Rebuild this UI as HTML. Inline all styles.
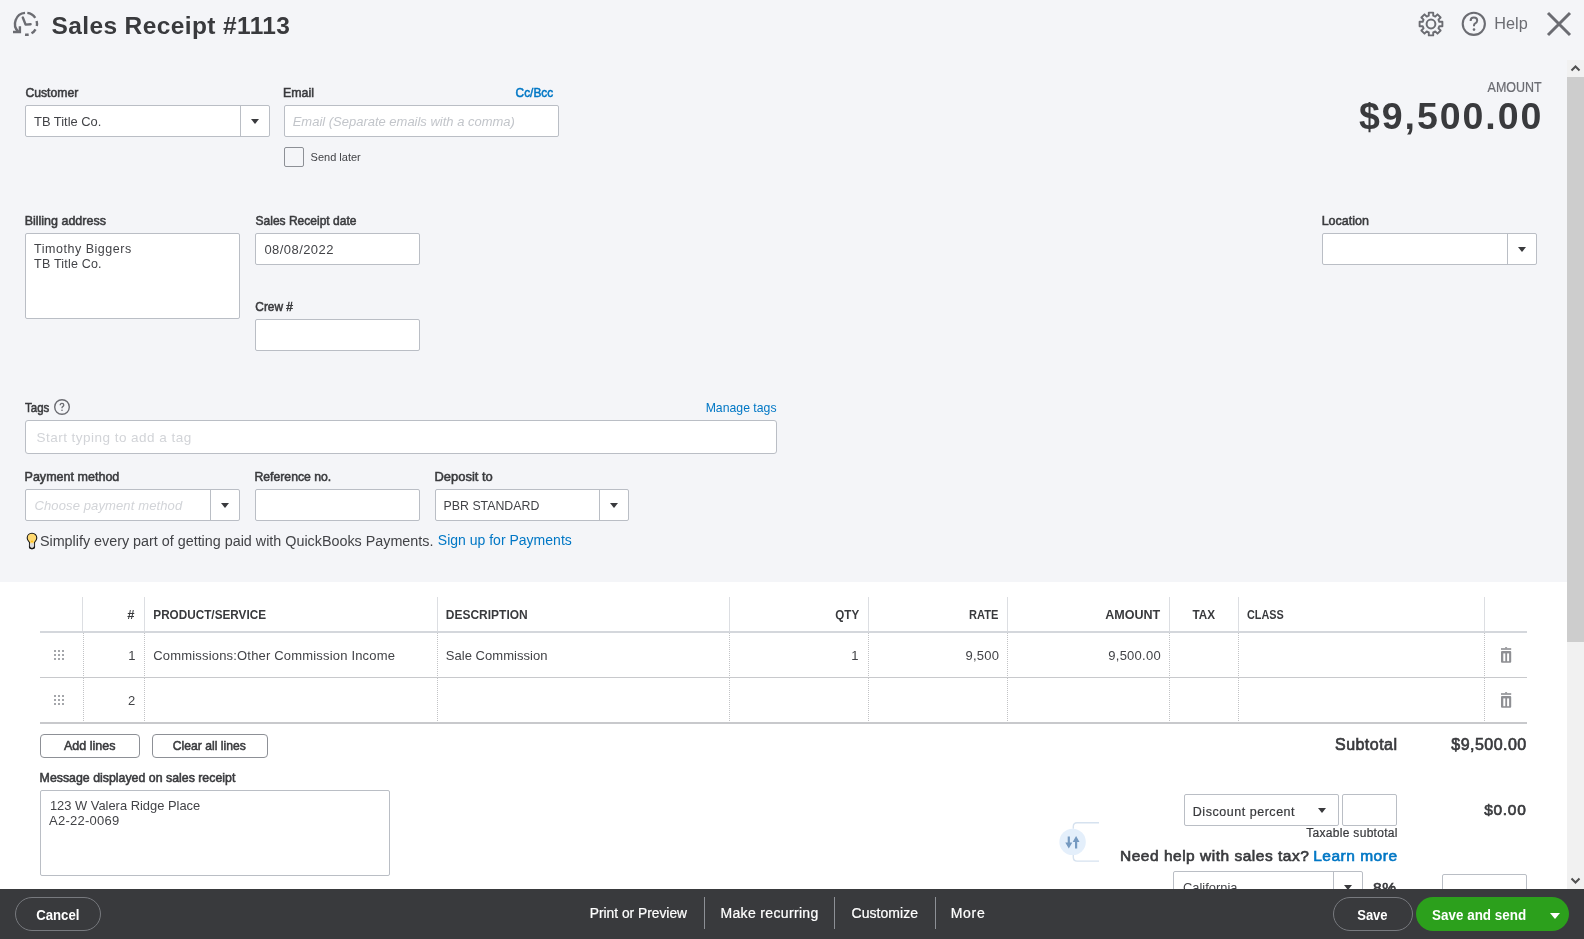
<!DOCTYPE html>
<html><head><meta charset="utf-8">
<title>Sales Receipt #1113</title>
<style>
*{box-sizing:border-box;margin:0;padding:0}
html,body{width:1584px;height:939px;overflow:hidden;background:#fff}
body{font-family:"Liberation Sans",sans-serif;color:#393a3d;position:relative}
.a{position:absolute}
.topbg{position:absolute;left:0;top:0;width:1567px;height:582px;background:#f4f5f8}
.inp{position:absolute;background:#fff;border:1px solid #babec5;border-radius:2px}
.dd{position:absolute;top:0;bottom:0;right:0;border-left:1px solid #babec5}
.arr{position:absolute;width:0;height:0;border-left:4.5px solid transparent;border-right:4.5px solid transparent;border-top:5px solid #393a3d}
.hv{position:absolute;top:597px;width:1px;height:34px;background:#dcdee2}
.vl{position:absolute;width:1px;background-image:linear-gradient(to bottom,#c2c3c6 50%,transparent 50%);background-size:1px 2px}
.btn{position:absolute;border:1px solid #8d9096;border-radius:4px;background:#fff}
.foot{position:absolute;left:0;top:889px;width:1584px;height:50px;background:#393a3d;z-index:10}
.sep{position:absolute;top:897px;width:1px;height:32px;background:#8d9096;z-index:11}
</style></head><body>
<div class="topbg"></div>
<div class="a" style="left:1567px;top:0;width:17px;height:60px;background:#f4f5f8"></div>

<!-- header icons -->
<svg class="a" style="left:8px;top:6px" width="36" height="36" viewBox="0 0 36 36"><path d="M17.04 6.84 A11 11 0 0 0 10.22 25.58 M19.34 6.88 A11 11 0 0 1 27.23 11.81 M28.63 14.95 A11 11 0 0 1 28.76 20.09 M27.53 23.30 A11 11 0 0 1 23.50 27.33 M20.66 28.47 A11 11 0 0 1 17.04 28.76" fill="none" stroke="#6b6c72" stroke-width="2.4"/><path d="M5 26 H11.9 V20.3" fill="none" stroke="#6b6c72" stroke-width="2.4"/><path d="M14.8 11.5 L17.6 18.6 L22.6 18.2" fill="none" stroke="#6b6c72" stroke-width="2.4" stroke-linecap="round" stroke-linejoin="round"/></svg>
<svg class="a" style="left:1416.5px;top:10px" width="28" height="28" viewBox="0 0 28 28"><path d="M11.77 5.69 L11.79 2.61 L16.21 2.61 L16.23 5.69 L18.30 6.55 L20.49 4.38 L23.62 7.51 L21.45 9.70 L22.31 11.77 L25.39 11.79 L25.39 16.21 L22.31 16.23 L21.45 18.30 L23.62 20.49 L20.49 23.62 L18.30 21.45 L16.23 22.31 L16.21 25.39 L11.79 25.39 L11.77 22.31 L9.70 21.45 L7.51 23.62 L4.38 20.49 L6.55 18.30 L5.69 16.23 L2.61 16.21 L2.61 11.79 L5.69 11.77 L6.55 9.70 L4.38 7.51 L7.51 4.38 L9.70 6.55 Z" fill="none" stroke="#6b6c72" stroke-width="1.9" stroke-linejoin="round"/><circle cx="14" cy="14" r="4.4" fill="none" stroke="#6b6c72" stroke-width="2"/></svg>
<svg class="a" style="left:1460px;top:10px" width="28" height="28" viewBox="0 0 28 28"><circle cx="13.8" cy="13.8" r="11.1" fill="none" stroke="#6b6c72" stroke-width="2.1"/><path d="M10.6 11 Q10.6 7.6 13.9 7.6 Q17.2 7.6 17.2 10.6 Q17.2 12.6 14.9 13.6 Q14 14.1 14 15.6 V16.2" fill="none" stroke="#6b6c72" stroke-width="2"/><circle cx="14" cy="19.6" r="1.3" fill="#6b6c72"/></svg>
<svg class="a" style="left:1544px;top:9px" width="30" height="30" viewBox="0 0 30 30"><path d="M4 4 L26 26 M26 4 L4 26" stroke="#6b6c72" stroke-width="3"/></svg>

<!-- customer / email -->
<div class="inp" style="left:25px;top:105px;width:245px;height:32px"><div class="dd" style="width:29px"></div></div>
<div class="arr" style="left:251px;top:119px"></div>
<div class="inp" style="left:284px;top:105px;width:275px;height:32px"></div>
<div class="inp" style="left:284px;top:147px;width:20px;height:20px;border:1.5px solid #8d9096;border-radius:2px;background:transparent"></div>

<!-- billing / date / crew / location -->
<div class="inp" style="left:25px;top:233px;width:215px;height:86px"></div>
<div class="inp" style="left:255px;top:233px;width:165px;height:32px"></div>
<div class="inp" style="left:255px;top:319px;width:165px;height:32px"></div>
<div class="inp" style="left:1322px;top:233px;width:215px;height:32px"><div class="dd" style="width:29px"></div></div>
<div class="arr" style="left:1518px;top:247px"></div>

<!-- tags -->
<svg class="a" style="left:52px;top:397px" width="20" height="20" viewBox="0 0 20 20"><circle cx="10" cy="10" r="7.3" fill="none" stroke="#6b6c72" stroke-width="1.4"/><path d="M8.2 8.3 Q8.2 6.4 10 6.4 Q11.8 6.4 11.8 8 Q11.8 9 10.7 9.6 Q10 10 10 10.9 V11.3" fill="none" stroke="#6b6c72" stroke-width="1.3"/><circle cx="10" cy="13.2" r="0.8" fill="#6b6c72"/></svg>
<div class="inp" style="left:25px;top:420px;width:752px;height:34px;border-radius:3px"></div>

<!-- payment -->
<div class="inp" style="left:25px;top:489px;width:215px;height:32px"><div class="dd" style="width:29px"></div></div>
<div class="arr" style="left:221px;top:503px"></div>
<div class="inp" style="left:255px;top:489px;width:165px;height:32px"></div>
<div class="inp" style="left:435px;top:489px;width:194px;height:32px"><div class="dd" style="width:29px"></div></div>
<div class="arr" style="left:610px;top:503px"></div>

<svg class="a" style="left:24px;top:531px" width="16" height="20" viewBox="0 0 16 20"><path d="M8 2.3 C5.1 2.3 3.2 4.4 3.2 6.9 C3.2 8.9 4.5 10 5.5 11.5 L5.5 15.5 Q5.5 17.6 8 17.6 Q10.5 17.6 10.5 15.5 L10.5 11.5 C11.5 10 12.8 8.9 12.8 6.9 C12.8 4.4 10.9 2.3 8 2.3 Z" fill="#ffd970" stroke="#1a1a1a" stroke-width="1.1"/><path d="M5.9 12.2 H10.1 V15.6 Q10.1 17 8 17 Q5.9 17 5.9 15.6 Z" fill="#dcdcdc"/><path d="M6.6 9.8 L8 11.5 L9.4 9.8 Z" fill="#ffb800"/><path d="M5.5 15.5 Q5.5 17.6 8 17.6 Q10.5 17.6 10.5 15.5" fill="none" stroke="#1a1a1a" stroke-width="1.3"/></svg>

<!-- table -->
<div class="hv" style="left:82px"></div>
<div class="hv" style="left:144px"></div>
<div class="hv" style="left:437px"></div>
<div class="hv" style="left:729px"></div>
<div class="hv" style="left:868px"></div>
<div class="hv" style="left:1007px"></div>
<div class="hv" style="left:1169px"></div>
<div class="hv" style="left:1238px"></div>
<div class="hv" style="left:1484px"></div>
<div class="a" style="left:40px;top:631px;width:1487px;height:2px;background:#d4d7dc"></div>

<div class="vl" style="left:83px;top:633px;height:44px"></div>
<div class="vl" style="left:144px;top:633px;height:44px"></div>
<div class="vl" style="left:437px;top:633px;height:44px"></div>
<div class="vl" style="left:729px;top:633px;height:44px"></div>
<div class="vl" style="left:868px;top:633px;height:44px"></div>
<div class="vl" style="left:1007px;top:633px;height:44px"></div>
<div class="vl" style="left:1169px;top:633px;height:44px"></div>
<div class="vl" style="left:1238px;top:633px;height:44px"></div>
<div class="vl" style="left:1484px;top:633px;height:44px"></div>
<div class="a" style="left:40px;top:677px;width:1487px;height:1px;background:#c8c9cc"></div>
<div class="vl" style="left:83px;top:678px;height:44px"></div>
<div class="vl" style="left:144px;top:678px;height:44px"></div>
<div class="vl" style="left:437px;top:678px;height:44px"></div>
<div class="vl" style="left:729px;top:678px;height:44px"></div>
<div class="vl" style="left:868px;top:678px;height:44px"></div>
<div class="vl" style="left:1007px;top:678px;height:44px"></div>
<div class="vl" style="left:1169px;top:678px;height:44px"></div>
<div class="vl" style="left:1238px;top:678px;height:44px"></div>
<div class="vl" style="left:1484px;top:678px;height:44px"></div>
<div class="a" style="left:40px;top:722px;width:1487px;height:2px;background:#c8c9cc"></div>

<svg class="a" style="left:54px;top:650px" width="10" height="10" viewBox="0 0 10 10" fill="#a4a6aa"><rect x="0" y="0" width="2" height="2"/><rect x="4" y="0" width="2" height="2"/><rect x="8" y="0" width="2" height="2"/><rect x="0" y="4" width="2" height="2"/><rect x="4" y="4" width="2" height="2"/><rect x="8" y="4" width="2" height="2"/><rect x="0" y="8" width="2" height="2"/><rect x="4" y="8" width="2" height="2"/><rect x="8" y="8" width="2" height="2"/></svg>
<svg class="a" style="left:54px;top:695px" width="10" height="10" viewBox="0 0 10 10" fill="#a4a6aa"><rect x="0" y="0" width="2" height="2"/><rect x="4" y="0" width="2" height="2"/><rect x="8" y="0" width="2" height="2"/><rect x="0" y="4" width="2" height="2"/><rect x="4" y="4" width="2" height="2"/><rect x="8" y="4" width="2" height="2"/><rect x="0" y="8" width="2" height="2"/><rect x="4" y="8" width="2" height="2"/><rect x="8" y="8" width="2" height="2"/></svg>
<svg class="a" style="left:1500px;top:646px" width="13" height="18" viewBox="0 0 13 18"><rect x="1" y="2.2" width="10.2" height="1.6" fill="#8e8f93"/><rect x="5.1" y="1.2" width="2" height="1.2" fill="#8e8f93"/><rect x="1" y="5" width="10.2" height="11.7" rx="1" fill="#8e8f93"/><rect x="3.3" y="7.4" width="2" height="7.8" fill="#fff"/><rect x="7.1" y="7.4" width="2" height="7.8" fill="#fff"/></svg>
<svg class="a" style="left:1500px;top:691px" width="13" height="18" viewBox="0 0 13 18"><rect x="1" y="2.2" width="10.2" height="1.6" fill="#8e8f93"/><rect x="5.1" y="1.2" width="2" height="1.2" fill="#8e8f93"/><rect x="1" y="5" width="10.2" height="11.7" rx="1" fill="#8e8f93"/><rect x="3.3" y="7.4" width="2" height="7.8" fill="#fff"/><rect x="7.1" y="7.4" width="2" height="7.8" fill="#fff"/></svg>

<div class="btn" style="left:40px;top:734px;width:100px;height:24px"></div>
<div class="btn" style="left:152px;top:734px;width:116px;height:24px"></div>
<div class="inp" style="left:40px;top:790px;width:350px;height:86px"></div>

<div class="inp" style="left:1184px;top:794px;width:155px;height:32px"></div>
<div class="arr" style="left:1317.5px;top:808px"></div>
<div class="inp" style="left:1342px;top:794px;width:55px;height:32px"></div>

<svg class="a" style="left:1056px;top:818px" width="48" height="46" viewBox="0 0 48 46"><path d="M17.3 10.8 V8.5 Q17.3 4.7 21.1 4.7 H43 M17.3 37 V39.3 Q17.3 43.1 21.1 43.1 H43" fill="none" stroke="#d6e2ef" stroke-width="1.4"/><circle cx="16.6" cy="23.9" r="13.2" fill="#e4effb"/><path d="M12.8 18.4 V25.5 M20.1 30.5 V23.5" stroke="#7599c0" stroke-width="2.2"/><path d="M9.3 24.4 H16.3 L12.8 30.5 Z M16.7 23.9 H23.5 L20.1 17.9 Z" fill="#7599c0"/></svg>

<div class="inp" style="left:1173px;top:871px;width:190px;height:34px"><div class="dd" style="width:29px"></div></div>
<div class="arr" style="left:1344px;top:885px"></div>
<div class="inp" style="left:1442px;top:874px;width:85px;height:32px"></div>

<svg class="a" style="left:0;top:0;z-index:5;will-change:transform" width="1584" height="939" viewBox="0 0 1584 939" font-family="Liberation Sans">
<text x="51.50" y="34.00" font-size="24.5" fill="#393a3d" font-weight="bold" letter-spacing="0.381">Sales Receipt #1113</text>
<text transform="matrix(0.9860 0 0 1 1494.31 29.20)" font-size="16.5" fill="#6b6c72">Help</text>
<text transform="matrix(0.8902 0 0 1 1487.60 92.30)" font-size="14.0" fill="#6b6c72" stroke="#6b6c72" stroke-width="0.22">AMOUNT</text>
<text x="1359.00" y="128.70" font-size="37.5" fill="#393a3d" font-weight="bold" letter-spacing="1.941">$9,500.00</text>
<text transform="matrix(0.9400 0 0 1 25.40 97.00)" font-size="13.0" fill="#393a3d" stroke="#393a3d" stroke-width="0.55">Customer</text>
<text transform="matrix(0.9936 0 0 1 34.00 126.00)" font-size="13.0" fill="#424347">TB Title Co.</text>
<text transform="matrix(0.9551 0 0 1 282.94 97.00)" font-size="13.0" fill="#393a3d" stroke="#393a3d" stroke-width="0.55">Email</text>
<text transform="matrix(0.9119 0 0 1 515.60 97.00)" font-size="13.0" fill="#0077c5" stroke="#0077c5" stroke-width="0.55">Cc/Bcc</text>
<text transform="matrix(0.9624 0 0 1 292.70 126.20)" font-size="13.5" fill="#c2c5ca" font-style="italic">Email (Separate emails with a comma)</text>
<text transform="matrix(0.9564 0 0 1 310.60 160.80)" font-size="11.5" fill="#424347">Send later</text>
<text transform="matrix(0.9614 0 0 1 24.64 225.00)" font-size="13.0" fill="#393a3d" stroke="#393a3d" stroke-width="0.55">Billing address</text>
<text x="34.10" y="252.70" font-size="12.5" fill="#424347" letter-spacing="0.515">Timothy Biggers</text>
<text x="34.10" y="267.90" font-size="12.5" fill="#424347" letter-spacing="0.196">TB Title Co.</text>
<text transform="matrix(0.9257 0 0 1 255.50 225.00)" font-size="13.0" fill="#393a3d" stroke="#393a3d" stroke-width="0.55">Sales Receipt date</text>
<text x="264.40" y="253.80" font-size="13.0" fill="#424347" letter-spacing="0.441">08/08/2022</text>
<text transform="matrix(0.9154 0 0 1 255.30 311.00)" font-size="13.0" fill="#393a3d" stroke="#393a3d" stroke-width="0.55">Crew #</text>
<text transform="matrix(0.9641 0 0 1 1321.64 225.00)" font-size="13.0" fill="#393a3d" stroke="#393a3d" stroke-width="0.55">Location</text>
<text transform="matrix(0.8834 0 0 1 25.10 411.80)" font-size="13.0" fill="#393a3d" stroke="#393a3d" stroke-width="0.55">Tags</text>
<text transform="matrix(0.9442 0 0 1 705.66 412.00)" font-size="13.0" fill="#0077c5">Manage tags</text>
<text x="36.50" y="441.80" font-size="13.5" fill="#d2d4d8" letter-spacing="0.473">Start typing to add a tag</text>
<text transform="matrix(0.9655 0 0 1 24.53 480.50)" font-size="13.0" fill="#393a3d" stroke="#393a3d" stroke-width="0.55">Payment method</text>
<text x="34.50" y="509.70" font-size="13.0" fill="#d2d4d8" font-style="italic" letter-spacing="0.119">Choose payment method</text>
<text transform="matrix(0.9419 0 0 1 254.46 480.50)" font-size="13.0" fill="#393a3d" stroke="#393a3d" stroke-width="0.55">Reference no.</text>
<text transform="matrix(0.9965 0 0 1 434.50 480.50)" font-size="13.0" fill="#393a3d" stroke="#393a3d" stroke-width="0.55">Deposit to</text>
<text transform="matrix(0.9877 0 0 1 443.61 510.00)" font-size="12.5" fill="#424347">PBR STANDARD</text>
<text transform="matrix(0.9899 0 0 1 39.90 546.00)" font-size="14.5" fill="#424347">Simplify every part of getting paid with QuickBooks Payments.</text>
<text transform="matrix(0.9676 0 0 1 437.80 545.00)" font-size="14.5" fill="#0077c5">Sign up for Payments</text>
<text x="127.20" y="619.00" font-size="13.0" fill="#393a3d" font-weight="bold">#</text>
<text transform="matrix(0.9052 0 0 1 153.30 619.00)" font-size="13.0" fill="#393a3d" font-weight="bold">PRODUCT/SERVICE</text>
<text transform="matrix(0.9225 0 0 1 445.80 619.00)" font-size="13.0" fill="#393a3d" font-weight="bold">DESCRIPTION</text>
<text transform="matrix(0.8945 0 0 1 835.30 619.00)" font-size="13.0" fill="#393a3d" font-weight="bold">QTY</text>
<text transform="matrix(0.8517 0 0 1 969.10 619.00)" font-size="13.0" fill="#393a3d" font-weight="bold">RATE</text>
<text transform="matrix(0.9666 0 0 1 1105.20 619.00)" font-size="13.0" fill="#393a3d" font-weight="bold">AMOUNT</text>
<text transform="matrix(0.9028 0 0 1 1192.40 619.00)" font-size="13.0" fill="#393a3d" font-weight="bold">TAX</text>
<text transform="matrix(0.8358 0 0 1 1247.00 619.00)" font-size="13.0" fill="#393a3d" font-weight="bold">CLASS</text>
<text x="128.20" y="660.00" font-size="13.0" fill="#424347">1</text>
<text x="153.30" y="660.00" font-size="13.0" fill="#424347" letter-spacing="0.180">Commissions:Other Commission Income</text>
<text x="445.80" y="660.00" font-size="13.0" fill="#424347" letter-spacing="0.035">Sale Commission</text>
<text x="851.30" y="660.00" font-size="13.0" fill="#424347">1</text>
<text x="965.50" y="660.00" font-size="13.0" fill="#424347" letter-spacing="0.225">9,500</text>
<text x="1108.30" y="660.00" font-size="13.0" fill="#424347" letter-spacing="0.247">9,500.00</text>
<text x="128.00" y="705.20" font-size="13.0" fill="#424347">2</text>
<text transform="matrix(0.9652 0 0 1 63.90 750.10)" font-size="13.0" fill="#393a3d" stroke="#393a3d" stroke-width="0.55">Add lines</text>
<text transform="matrix(0.9347 0 0 1 172.80 750.10)" font-size="13.0" fill="#393a3d" stroke="#393a3d" stroke-width="0.55">Clear all lines</text>
<text transform="matrix(0.9891 0 0 1 39.61 782.10)" font-size="12.5" fill="#393a3d" stroke="#393a3d" stroke-width="0.55">Message displayed on sales receipt</text>
<text transform="matrix(0.9935 0 0 1 49.90 810.00)" font-size="13.0" fill="#424347">123 W Valera Ridge Place</text>
<text x="49.10" y="824.80" font-size="13.0" fill="#424347" letter-spacing="0.243">A2-22-0069</text>
<text x="1335.00" y="749.90" font-size="16.0" fill="#393a3d" stroke="#393a3d" stroke-width="0.65" letter-spacing="0.463">Subtotal</text>
<text x="1451.30" y="749.90" font-size="16.0" fill="#393a3d" stroke="#393a3d" stroke-width="0.65" letter-spacing="0.465">$9,500.00</text>
<text x="1192.80" y="816.10" font-size="12.5" fill="#393a3d" stroke="#393a3d" stroke-width="0.22" letter-spacing="0.532">Discount percent</text>
<text x="1306.30" y="836.80" font-size="12.0" fill="#393a3d" stroke="#393a3d" stroke-width="0.22" letter-spacing="0.296">Taxable subtotal</text>
<text x="1484.20" y="814.90" font-size="15.5" fill="#393a3d" stroke="#393a3d" stroke-width="0.65" letter-spacing="0.708">$0.00</text>
<text x="1120.00" y="860.50" font-size="15.5" fill="#393a3d" stroke="#393a3d" stroke-width="0.65" letter-spacing="0.508">Need help with sales tax?</text>
<text x="1313.20" y="860.50" font-size="15.5" fill="#0077c5" stroke="#0077c5" stroke-width="0.65" letter-spacing="0.506">Learn more</text>
<text transform="matrix(0.9913 0 0 1 1183.00 892.00)" font-size="13.0" fill="#424347">California</text>
<text x="1373.00" y="892.50" font-size="15.5" fill="#393a3d" stroke="#393a3d" stroke-width="0.65" letter-spacing="0.680">8%</text>
</svg>

<!-- scrollbar -->
<div class="a" style="left:1567px;top:60px;width:17px;height:829px;background:#f1f1f1;z-index:6"></div>
<div class="a" style="left:1567px;top:77px;width:17px;height:565px;background:#cdcdcd;z-index:6"></div>
<svg class="a" style="left:1567px;top:60px;z-index:7" width="17" height="17" viewBox="0 0 17 17"><path d="M4.5 10.5 L8.5 6.5 L12.5 10.5" fill="none" stroke="#505050" stroke-width="2"/></svg>
<svg class="a" style="left:1567px;top:872px;z-index:7" width="17" height="17" viewBox="0 0 17 17"><path d="M4.5 6.5 L8.5 10.5 L12.5 6.5" fill="none" stroke="#505050" stroke-width="2"/></svg>

<!-- footer -->
<div class="foot"></div>
<div class="a" style="left:15px;top:897px;width:86px;height:34px;border:1px solid #77797e;border-radius:17px;z-index:11"></div>
<div class="sep" style="left:704px"></div>
<div class="sep" style="left:834px"></div>
<div class="sep" style="left:935px"></div>
<div class="a" style="left:1333px;top:897px;width:80px;height:34px;border:1px solid #77797e;border-radius:17px;z-index:11"></div>
<div class="a" style="left:1416px;top:897px;width:153px;height:34px;border-radius:17px;background:#2ca01c;z-index:11"></div>
<div class="a" style="left:1550px;top:912.5px;width:0;height:0;border-left:5px solid transparent;border-right:5px solid transparent;border-top:6px solid #fff;z-index:12"></div>
<svg class="a" style="left:0;top:0;z-index:12;will-change:transform" width="1584" height="939" viewBox="0 0 1584 939" font-family="Liberation Sans">
<text transform="matrix(0.8792 0 0 1 36.20 920.00)" font-size="15.0" fill="#ffffff" font-weight="bold">Cancel</text>
<text transform="matrix(0.9859 0 0 1 589.71 917.70)" font-size="14.0" fill="#ffffff" stroke="#ffffff" stroke-width="0.22">Print or Preview</text>
<text x="720.40" y="917.70" font-size="14.0" fill="#ffffff" stroke="#ffffff" stroke-width="0.22" letter-spacing="0.348">Make recurring</text>
<text x="851.50" y="917.70" font-size="14.0" fill="#ffffff" stroke="#ffffff" stroke-width="0.22" letter-spacing="0.044">Customize</text>
<text x="950.80" y="917.70" font-size="14.0" fill="#ffffff" stroke="#ffffff" stroke-width="0.22" letter-spacing="0.663">More</text>
<text transform="matrix(0.8994 0 0 1 1357.20 919.70)" font-size="14.5" fill="#ffffff" font-weight="bold">Save</text>
<text transform="matrix(0.9257 0 0 1 1432.10 919.70)" font-size="14.5" fill="#ffffff" font-weight="bold">Save and send</text>
</svg>
</body></html>
